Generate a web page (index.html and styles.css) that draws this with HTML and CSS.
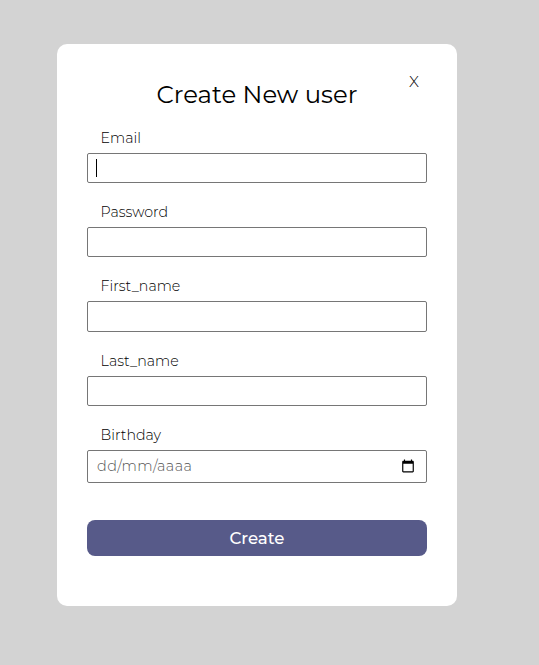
FILE: index.html
```html
<!DOCTYPE html>
<html lang="en">
<head>
<meta charset="utf-8">
<title>Create New user</title>
<link rel="stylesheet" href="styles.css">
</head>
<body>
<form class="card">
  <button class="close" type="button">X</button>
  <h1 class="title">Create New user</h1>
  <div class="field">
    <label class="label" for="email">Email</label>
    <div class="control"><input class="input" id="email" type="email"><span class="caret"></span></div>
  </div>
  <div class="field">
    <label class="label" for="password">Password</label>
    <div class="control"><input class="input" id="password" type="password"></div>
  </div>
  <div class="field">
    <label class="label" for="first">First_name</label>
    <div class="control tall"><input class="input" id="first" type="text"></div>
  </div>
  <div class="field">
    <label class="label" for="last">Last_name</label>
    <div class="control"><input class="input" id="last" type="text"></div>
  </div>
  <div class="field">
    <label class="label" for="birthday">Birthday</label>
    <div class="control date"><input class="input" id="birthday" type="text" placeholder="dd/mm/aaaa">
      <svg class="calendar" viewBox="0 0 24 24"><path d="M20 3h-1V1h-2v2H7V1H5v2H4c-1.100 0-2 .9-2 2v16c0 1.100.9 2 2 2h16c1.100 0 2-.9 2-2V5c0-1.100-.9-2-2-2zm0 18H4V8h16v13z"/></svg>
    </div>
  </div>
  <button class="submit" type="button">Create</button>
</form>
</body>
</html>
```
FILE: styles.css
```css
* {
  box-sizing: border-box;
}

body {
  margin: 0;
  min-height: 665px;
  padding: 44px 0 0 57px;
  background: #d3d3d3;
  color: #000;
  font-family: Montserrat, Inter, sans-serif;
}

.card {
  position: relative;
  width: 400px;
  height: 562px;
  padding: 33px 30px 0;
  border-radius: 10px;
  background: #fff;
}

.close {
  position: absolute;
  top: 28px;
  right: 38px;
  padding: 0;
  border: 0;
  background: none;
  color: #000;
  font: 350 15.500px/20px Montserrat, Inter, sans-serif;
}

.title {
  margin: 0 0 7px;
  font-size: 24.4px;
  font-weight: 400;
  line-height: 34px;
  text-align: center;
}

.field {
  height: 74.2px;
}

.label {
  display: block;
  height: 35px;
  padding-left: 13.6px;
  font-size: 14.2px;
  font-weight: 330;
  line-height: 40px;
}

.control {
  position: relative;
  display: flex;
  height: 30px;
  border: 1px solid #767676;
  border-radius: 2px;
}

.tall {
  height: 31px;
}

.date {
  height: 33px;
  align-items: center;
}

.input {
  flex: 1;
  min-width: 0;
  padding: 0 9px;
  border: 0;
  outline: 0;
  background: none;
  font: 300 14.400px/20px Montserrat, Inter, sans-serif;
  letter-spacing: 0.45px;
}

.input::placeholder {
  color: #555;
}

.caret {
  position: absolute;
  top: 5px;
  left: 8px;
  width: 1px;
  height: 18px;
  background: #000;
}

.calendar {
  width: 14px;
  height: 14px;
  margin-right: 11px;
}

.submit {
  display: block;
  width: 100%;
  height: 36px;
  margin-top: 31px;
  padding: 0;
  border: 0;
  border-radius: 8px;
  background: #575a89;
  color: #fff;
  font: 530 16.600px/37px Montserrat, Inter, sans-serif;
}
```
